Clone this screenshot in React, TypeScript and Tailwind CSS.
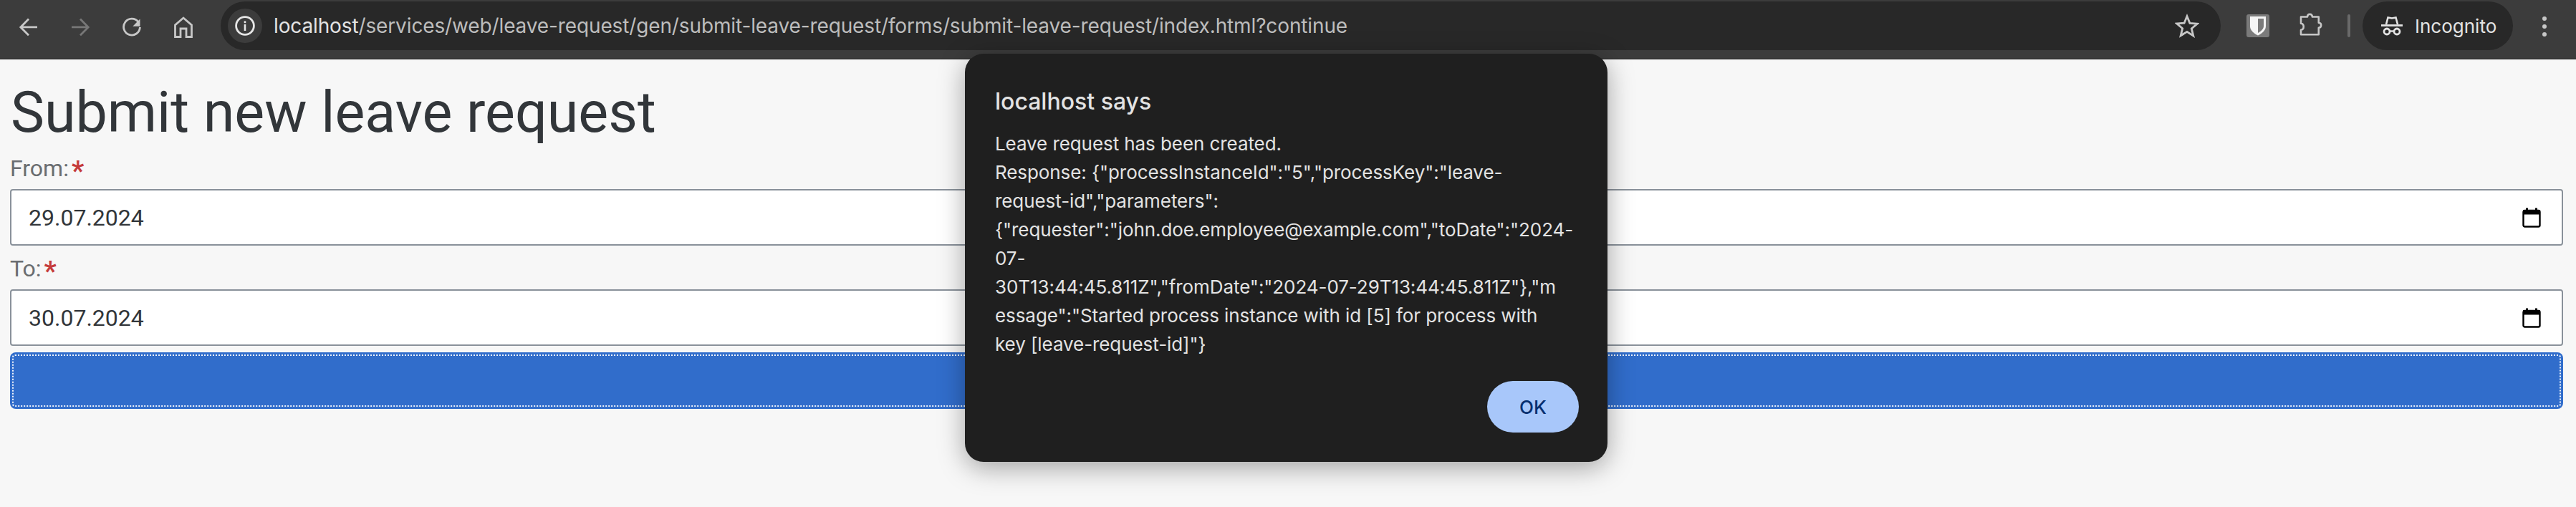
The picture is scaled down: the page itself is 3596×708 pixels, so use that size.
import React from "react";

const stroke = "#c7c7c7";

function Back({ color = stroke, flip = false }: { color?: string; flip?: boolean }) {
  return (
    <svg width="28" height="28" viewBox="0 0 28 28" fill="none" className={flip ? "-scale-x-100" : ""}>
      <path d="M14 2.500 2.800 13.900 14 25.300M2.800 13.900h23.200" stroke={color} strokeWidth="2.800" />
    </svg>
  );
}

function Reload() {
  return (
    <svg width="28" height="28" viewBox="0 0 28 28" fill="none">
      <path d="M23 6.600A11.400 11.400 0 1 0 25.400 14" stroke={stroke} strokeWidth="2.800" />
      <path d="M25.500 2.500v10.200H15.300z" fill={stroke} />
    </svg>
  );
}

function Home() {
  return (
    <svg width="26" height="30" viewBox="0 0 26 30" fill="none">
      <path d="M1.500 28.500V12L13 2l11.500 10v16.500H17V17H9v11.500z" stroke={stroke} strokeWidth="2.800" />
    </svg>
  );
}

function Info() {
  return (
    <svg width="28" height="28" viewBox="0 0 28 28" fill="none">
      <circle cx="14" cy="14" r="12.400" stroke="#e6e6e6" strokeWidth="2.800" />
      <rect x="12.700" y="12" width="2.600" height="9" fill="#e6e6e6" />
      <rect x="12.700" y="7.400" width="2.600" height="2.800" fill="#e6e6e6" />
    </svg>
  );
}

function Star() {
  return (
    <svg width="34" height="34" viewBox="0 0 34 34" fill="none">
      <path d="M17 3.800l3.900 9.600 10.300.8-7.900 6.700 2.500 10.100L17 25.400 8.200 30.800l2.500-10.100-7.900-6.700 10.300-.8z" stroke={stroke} strokeWidth="2.800" />
    </svg>
  );
}

function Shield() {
  return (
    <div className="flex h-[32px] w-[32px] items-center justify-center rounded-[3px] bg-[#7b7b7b]">
      <svg width="22" height="28" viewBox="0 0 22 28">
        <path d="M0 1h22v13.500c0 6-5.500 10.500-11 13C5.500 25 0 20.500 0 14.500z" fill="#f5f5f5" />
        <path d="M11 4h8v10.500c0 3.800-3.600 7-8 9.500z" fill="#7b7b7b" />
      </svg>
    </div>
  );
}

function Puzzle() {
  return (
    <svg width="32" height="32" viewBox="0 0 32 32" fill="none">
      <path d="M2 5.500h9c.3-5 6.500-5 7 0h8.800v8.200c4.500.2 4.500 6.800 0 7v9.500H2v-6.400c5-.5 5-8.500 0-9z" stroke={stroke} strokeWidth="2.600" strokeLinejoin="round" />
    </svg>
  );
}

function Hat() {
  return (
    <svg width="30" height="28" viewBox="0 0 30 28" fill="none">
      <path d="M7 12 9.500 2.500l5.500 1 5.500-1L23 12" stroke="#e3e3e3" strokeWidth="2.600" />
      <path d="M0 13.500h30" stroke="#e3e3e3" strokeWidth="2.800" />
      <circle cx="8" cy="22" r="4" stroke="#e3e3e3" strokeWidth="2.800" />
      <circle cx="22" cy="22" r="4" stroke="#e3e3e3" strokeWidth="2.800" />
      <path d="M12 21.500h6" stroke="#e3e3e3" strokeWidth="2.400" />
    </svg>
  );
}

function Calendar() {
  return (
    <svg width="26" height="28" viewBox="0 0 26 28" fill="none" className="shrink-0">
      <rect x="1.500" y="4" width="23" height="22.500" rx="2" stroke="#000" strokeWidth="2.400" />
      <rect x="1" y="3" width="24" height="6.500" fill="#000" />
      <rect x="5" y="0.500" width="3" height="4" fill="#000" />
      <rect x="18" y="0.500" width="3" height="4" fill="#000" />
    </svg>
  );
}

function NavBtn({ children }: { children: React.ReactNode }) {
  return <div className="flex h-[72px] w-[72px] items-center justify-center">{children}</div>;
}

function Field({ label, value, labelClass }: { label: string; value: string; labelClass: string }) {
  return (
    <div>
      <div className={`flex items-baseline font-['Roboto',sans-serif] text-[32px] leading-[40px] text-[#6a6d70] ${labelClass}`}>
        <span>{label}</span>
        <span className="ml-[4px] translate-y-[6px] text-[38px] font-bold text-[#c53b3b]">*</span>
      </div>
      <div className="flex h-[79px] items-center justify-between rounded-[4px] border-2 border-[#89919a] bg-white pl-[24px] pr-[29px]">
        <span className="font-['Roboto',sans-serif] text-[32px] text-[#32363a]">{value}</span>
        <Calendar />
      </div>
    </div>
  );
}

export default function App() {
  const lines = [
    'Leave request has been created.',
    'Response: {"processInstanceId":"5","processKey":"leave-',
    'request-id","parameters":',
    '{"requester":"john.doe.employee@example.com","toDate":"2024-',
    '07-',
    '30T13:44:45.811Z","fromDate":"2024-07-29T13:44:45.811Z"},"m',
    'essage":"Started process instance with id [5] for process with',
    'key [leave-request-id]"}',
  ];
  return (
    <div className="relative h-[708px] w-[3596px] overflow-hidden bg-[#f7f7f7] font-['Inter',sans-serif]">
      <header className="flex h-[83px] items-start border-b-2 border-[#353535] bg-[#3c3c3c] pr-[41px] pt-[2px]">
        <div className="ml-[4px] flex">
          <NavBtn><Back /></NavBtn>
          <NavBtn><Back color="#777777" flip /></NavBtn>
          <NavBtn><Reload /></NavBtn>
          <NavBtn><Home /></NavBtn>
        </div>
        <div className="ml-[16px] flex h-[68px] flex-1 items-center rounded-full bg-[#282828] pl-[10px] pr-[30px]">
          <div className="flex h-[48px] w-[48px] items-center justify-center rounded-full bg-[#3c3c3c]"><Info /></div>
          <div className="ml-[16px] flex-1 whitespace-nowrap text-[28px] tracking-[-0.13px] text-[#e3e3e3]">
            localhost<span className="text-[#bdbdbd]">/services/web/leave-request/gen/submit-leave-request/forms/submit-leave-request/index.html?continue</span>
          </div>
          <Star />
        </div>
        <div className="ml-[36px] mt-[18px]"><Shield /></div>
        <div className="ml-[42px] mt-[16px]"><Puzzle /></div>
        <div className="ml-[35px] mt-[18px] h-[32px] w-[4px] rounded-full bg-[#696969]" />
        <div className="ml-[17px] flex h-[68px] w-[210px] items-center rounded-full bg-[#282828] pl-[26px]">
          <Hat />
          <span className="ml-[17px] text-[26px] text-[#e3e3e3]">Incognito</span>
        </div>
        <div className="ml-[41px] mt-[21px] flex w-[6px] flex-col gap-[5px]">
          <div className="h-[6px] w-[6px] rounded-full bg-[#c7c7c7]" />
          <div className="h-[6px] w-[6px] rounded-full bg-[#c7c7c7]" />
          <div className="h-[6px] w-[6px] rounded-full bg-[#c7c7c7]" />
        </div>
      </header>

      <main className="pl-[14px] pr-[18px]">
        <h1 className="pl-[1px] pt-[23px] font-['Roboto',sans-serif] text-[79px] leading-[103px] text-[#32363a]">Submit new leave request</h1>
        <Field label="From:" value="29.07.2024" labelClass="h-[55px] pt-[4px]" />
        <Field label="To:" value="30.07.2024" labelClass="h-[61px] pt-[10px]" />
        <button className="mt-[9px] block h-[79px] w-full rounded-[8px] bg-[#316dcb] p-[3px]">
          <div className="h-full w-full rounded-[4px] border-2 border-dotted border-[#eef3fb]" />
        </button>
      </main>

      <div className="absolute left-[1347px] top-[75px] h-[570px] w-[897px] rounded-[26px] bg-[#1f1f1f] px-[42px] pt-[44px] text-[#e3e3e3] shadow-[0_8px_36px_rgba(0,0,0,0.35)]">
        <div className="text-[32px] leading-[46px] font-medium">localhost says</div>
        <div className="mt-[16px] text-[26px] leading-[40px] tracking-[-0.08px]">
          {lines.map((l) => (
            <div key={l} className="whitespace-nowrap">{l}</div>
          ))}
        </div>
        <button className="absolute left-[729px] top-[457px] h-[72px] w-[128px] rounded-full bg-[#a8c7fa] text-[26px] font-medium text-[#062e6f]">OK</button>
      </div>
    </div>
  );
}
